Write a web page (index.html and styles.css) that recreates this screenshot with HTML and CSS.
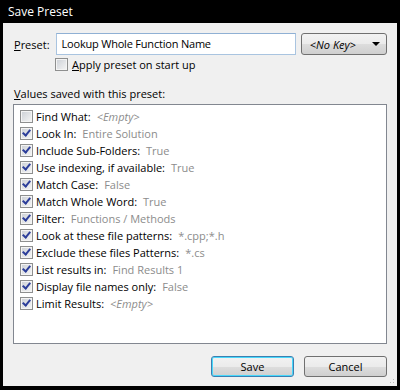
FILE: index.html
```html
<!DOCTYPE html>
<html lang="en">
<head>
    <meta charset="UTF-8">
    <title>Save Preset</title>
    <link rel="stylesheet" href="styles.css">
</head>
<body>
    <div class="window">
        <div class="titlebar">Save Preset</div>
        <div class="client">
            <div class="preset-row">
                <label class="label"><u>P</u>reset:</label>
                <div class="textbox">Lookup Whole Function Name</div>
                <div class="combo"><span class="combo-text">&lt;No Key&gt;</span><span class="arrow"></span></div>
            </div>
            <div class="apply-row">
                <span class="check"></span>
                <span><u>A</u>pply preset on start up</span>
            </div>
            <div class="values-label"><u>V</u>alues saved with this preset:</div>
            <div class="list">
                <div class="item"><span class="check"></span><span class="name">Find What:</span><span class="value empty">&lt;Empty&gt;</span></div>
                <div class="item"><span class="check on"></span><span class="name">Look In:</span><span class="value">Entire Solution</span></div>
                <div class="item"><span class="check on"></span><span class="name">Include Sub-Folders:</span><span class="value">True</span></div>
                <div class="item"><span class="check on"></span><span class="name">Use indexing, if available:</span><span class="value">True</span></div>
                <div class="item"><span class="check on"></span><span class="name">Match Case:</span><span class="value">False</span></div>
                <div class="item"><span class="check on"></span><span class="name">Match Whole Word:</span><span class="value">True</span></div>
                <div class="item"><span class="check on"></span><span class="name">Filter:</span><span class="value">Functions / Methods</span></div>
                <div class="item"><span class="check on"></span><span class="name">Look at these file patterns:</span><span class="value">*.cpp;*.h</span></div>
                <div class="item"><span class="check on"></span><span class="name">Exclude these files Patterns:</span><span class="value">*.cs</span></div>
                <div class="item"><span class="check on"></span><span class="name">List results in:</span><span class="value">Find Results 1</span></div>
                <div class="item"><span class="check on"></span><span class="name">Display file names only:</span><span class="value">False</span></div>
                <div class="item"><span class="check on"></span><span class="name">Limit Results:</span><span class="value empty">&lt;Empty&gt;</span></div>
            </div>
            <div class="buttons">
                <div class="button default">Save</div>
                <div class="button">Cancel</div>
            </div>
            <div class="grip"></div>
        </div>
    </div>
</body>
</html>
```

FILE: styles.css
```css
body {
    margin: 0;
    background: #000;
    font-family: "Open Sans", sans-serif;
    font-size: 11px;
    color: #000;
}
.window {
    width: 400px;
    height: 390px;
    background: #000;
    display: flex;
    flex-direction: column;
    box-sizing: border-box;
    padding: 0 3px 4px 3px;
}
.titlebar {
    height: 23px;
    line-height: 24px;
    color: #fff;
    font-size: 12px;
    padding-left: 5px;
}
.client {
    flex: 1;
    background: #f0f0f0;
    padding: 10px 10px 0 10px;
    display: flex;
    flex-direction: column;
    position: relative;
}
.preset-row {
    display: flex;
    align-items: center;
    height: 22px;
}
.label {
    width: 42px;
    padding-left: 1px;
}
.textbox {
    width: 236px;
    height: 20px;
    line-height: 20px;
    border: 1px solid #a9c4e0;
    border-top-color: #8fb0d4;
    background: #fff;
    padding-left: 5px;
    letter-spacing: -0.2px;
}
.combo {
    margin-left: 5px;
    height: 20px;
    border: 1px solid #707070;
    border-radius: 3px;
    background: linear-gradient(#f2f2f2 0%, #ebebeb 50%, #dddddd 51%, #cfcfcf 100%);
    display: flex;
    align-items: center;
    justify-content: space-between;
    padding: 0 6px 0 8px;
    width: 71px;
}
.combo-text {
    font-style: italic;
}
.arrow {
    width: 0;
    height: 0;
    border-left: 4px solid transparent;
    border-right: 4px solid transparent;
    border-top: 4px solid #000;
}
.apply-row {
    display: flex;
    align-items: center;
    margin: 2px 0 0 42px;
    height: 15px;
    gap: 4px;
}
.values-label {
    margin: 14px 0 0 1px;
    height: 16px;
}
.list {
    margin-top: 2px;
    height: 238px;
    border: 1px solid #828790;
    background: #fff;
    padding-top: 3px;
    box-sizing: border-box;
    height: 240px;
}
.item {
    display: flex;
    align-items: center;
    height: 17px;
    padding-left: 6px;
}
.item .check {
    margin-right: 3px;
}
.value {
    color: #8c8c8c;
    margin-left: 6px;
}
.value.empty {
    font-style: italic;
}
.check {
    width: 11px;
    height: 11px;
    border: 1px solid #8e8f8f;
    background: linear-gradient(135deg, #cbcfd5 0%, #f6f6f6 100%);
    box-shadow: inset 0 0 0 1px #f4f4f4;
    flex: none;
    position: relative;
}
.check.on::after {
    content: "";
    position: absolute;
    left: 3px;
    top: 0px;
    width: 3px;
    height: 6px;
    border: solid #2c3e9a;
    border-width: 0 2px 2px 0;
    transform: rotate(40deg);
}
.buttons {
    display: flex;
    justify-content: flex-end;
    gap: 10px;
    margin-top: 12px;
}
.button {
    width: 81px;
    height: 19px;
    line-height: 19px;
    text-align: center;
    border: 1px solid #707070;
    border-radius: 3px;
    background: linear-gradient(#f2f2f2 0%, #ebebeb 50%, #dddddd 51%, #cfcfcf 100%);
}
.button.default {
    border-color: #3c7fb1;
    box-shadow: inset 0 0 0 1px #48d8fb;
}
.grip {
    position: absolute;
    right: 1px;
    bottom: 1px;
    width: 10px;
    height: 10px;
    background-image: radial-gradient(circle, #b8b8b8 0.8px, transparent 1px);
    background-size: 3px 3px;
    clip-path: polygon(100% 0, 100% 100%, 0 100%);
}
```
